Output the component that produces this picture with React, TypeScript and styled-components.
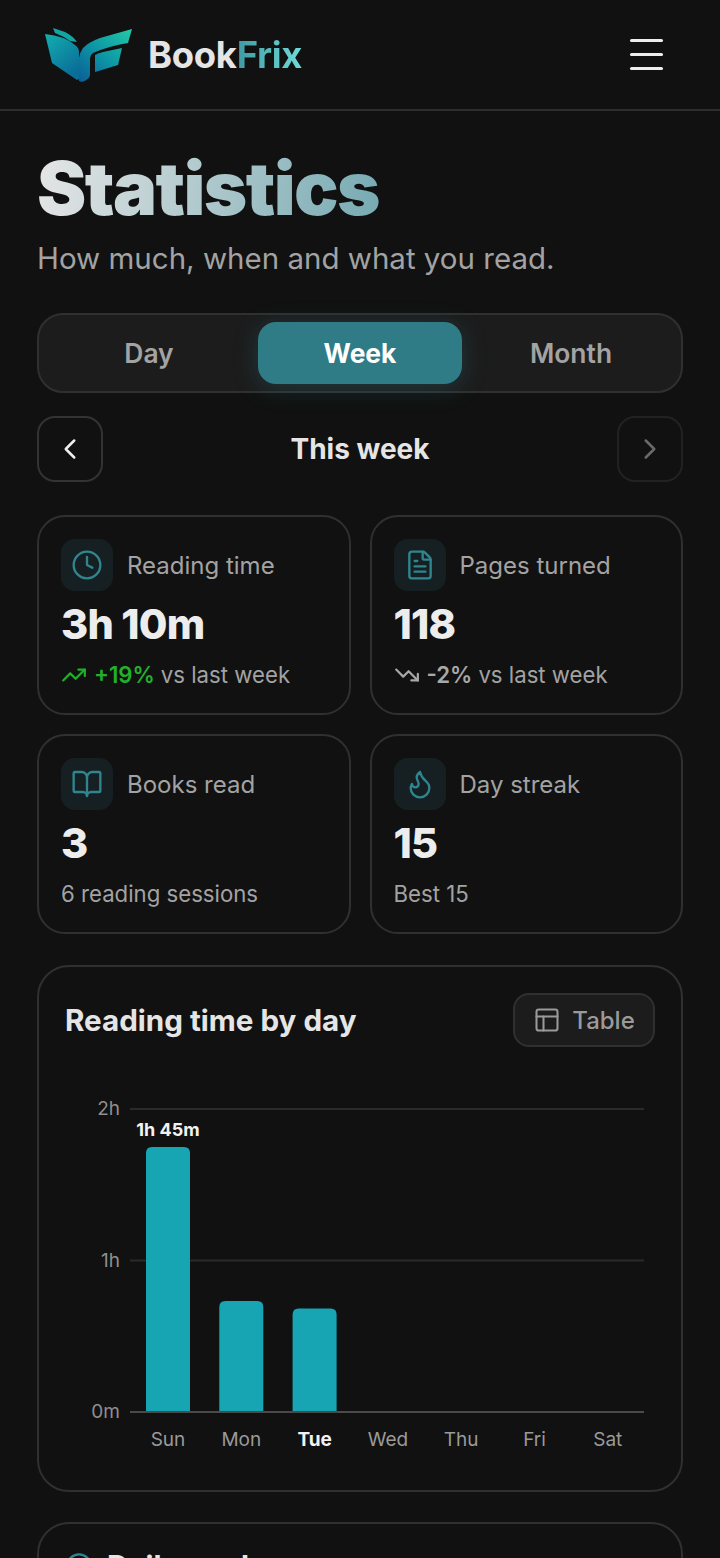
import React from 'react';
import styled, { createGlobalStyle } from 'styled-components';
import { BookOpen, ChevronLeft, ChevronRight, Clock, FileText, Flame, PanelsTopLeft, TrendingDown, TrendingUp } from 'lucide-react';

const GlobalStyle = createGlobalStyle`
  html, body {
    margin: 0;
    padding: 0;
    background: #111111;
  }
  * { box-sizing: border-box; }
`;

const Page = styled.div`
  width: 720px;
  height: 1558px;
  overflow: hidden;
  background: #111111;
  font-family: Inter, "Noto Sans", sans-serif;
  color: #e5e5e5;
`;

const Header = styled.header`
  height: 111px;
  padding: 0 57px 0 45px;
  display: flex;
  align-items: center;
  justify-content: space-between;
  border-bottom: 2px solid #2e2e2e;
`;

const Brand = styled.div`
  display: flex;
  align-items: center;
  gap: 15px;
`;

const BrandName = styled.span`
  font-size: 36.4px;
  font-weight: 700;
  letter-spacing: -0.3px;
  color: #e5e5e5;
  span {
    background: linear-gradient(90deg, #3f9aa3, #6fdcd8);
    -webkit-background-clip: text;
    background-clip: text;
    color: transparent;
  }
`;

const Burger = styled.div`
  width: 33px;
  display: flex;
  flex-direction: column;
  gap: 11px;
  i {
    display: block;
    height: 3px;
    border-radius: 2px;
    background: #eeeeee;
  }
`;

const Main = styled.main`
  padding: 37px 37px 0;
`;

const Title = styled.h1`
  margin: 0;
  font-size: 74px;
  line-height: 80px;
  font-weight: 900;
  letter-spacing: -1.6px;
  width: fit-content;
  background: linear-gradient(100deg, #e6e6e6 0%, #76aab2 100%);
  -webkit-background-clip: text;
  background-clip: text;
  color: transparent;
`;

const Subtitle = styled.p`
  margin: 10px 0 0;
  font-size: 29.5px;
  line-height: 40px;
  color: #a3a3a3;
`;

const Segments = styled.div`
  margin-top: 35px;
  height: 80px;
  padding: 7px 8px;
  display: grid;
  grid-template-columns: repeat(3, 1fr);
  gap: 7px;
  background: #1c1c1c;
  border: 2px solid #303030;
  border-radius: 26px;
`;

const Segment = styled.div<{ $active?: boolean }>`
  display: flex;
  align-items: center;
  justify-content: center;
  border-radius: 18px;
  font-size: 26.4px;
  font-weight: ${p => (p.$active ? 700 : 600)};
  color: ${p => (p.$active ? '#ffffff' : '#a3a3a3')};
  background: ${p => (p.$active ? '#2f7c87' : 'transparent')};
  box-shadow: ${p => (p.$active ? '0 4px 24px rgba(47, 124, 135, 0.3)' : 'none')};
`;

const Pager = styled.div`
  margin-top: 23px;
  display: flex;
  align-items: center;
  justify-content: space-between;
`;

const PagerButton = styled.div<{ $disabled?: boolean }>`
  width: 66px;
  height: 66px;
  display: flex;
  align-items: center;
  justify-content: center;
  border-radius: 18px;
  border: 2px solid ${p => (p.$disabled ? '#222222' : '#333333')};
  color: ${p => (p.$disabled ? '#6a6a6a' : '#eeeeee')};
`;

const PagerLabel = styled.div`
  font-size: 28px;
  font-weight: 700;
  color: #e5e5e5;
`;

const CardGrid = styled.div`
  margin-top: 33px;
  display: grid;
  grid-template-columns: repeat(2, 1fr);
  column-gap: 19px;
  row-gap: 19px;
`;

const StatCard = styled.div`
  height: 200px;
  padding: 22px 22px 0;
  border: 2px solid #303030;
  border-radius: 28px;
`;

const StatHead = styled.div`
  display: flex;
  align-items: center;
  gap: 14px;
`;

const IconBox = styled.div`
  width: 52px;
  height: 52px;
  flex: none;
  display: flex;
  align-items: center;
  justify-content: center;
  border-radius: 14px;
  background: #162022;
  color: #2f8590;
`;

const StatLabel = styled.span`
  font-size: 24px;
  color: #a3a3a3;
`;

const StatValue = styled.div`
  margin-top: 5px;
  font-size: 41.5px;
  line-height: 56px;
  font-weight: 800;
  letter-spacing: -0.8px;
  color: #ededed;
`;

const StatNote = styled.div`
  margin-top: 6px;
  display: flex;
  align-items: center;
  gap: 6px;
  font-size: 22.2px;
  line-height: 34px;
  color: #a3a3a3;
`;

const Delta = styled.span<{ $up?: boolean }>`
  display: inline-flex;
  align-items: center;
  gap: 7px;
  font-weight: 600;
  color: ${p => (p.$up ? '#22b02c' : '#a8a8a8')};
`;

const Panel = styled.section`
  margin-top: 30px;
  border: 2px solid #303030;
  border-radius: 32px;
  padding: 26px 26px 0;
`;

const ChartPanel = styled(Panel)`
  margin-top: 31px;
  height: 527px;
`;

const PanelHead = styled.div`
  display: flex;
  align-items: center;
  justify-content: space-between;
`;

const PanelTitle = styled.h2`
  margin: 0;
  display: flex;
  align-items: center;
  gap: 14px;
  font-size: 29.6px;
  font-weight: 700;
  color: #e5e5e5;
`;

const TableToggle = styled.div`
  height: 54px;
  width: 142px;
  display: flex;
  align-items: center;
  justify-content: center;
  gap: 11px;
  background: #1c1c1c;
  border: 2px solid #303030;
  border-radius: 16px;
  font-size: 24px;
  font-weight: 500;
  color: #9a9a9a;
`;

const Chart = styled.svg`
  display: block;
  margin: 34px 0 0 -27px;
  font-family: Inter, "Noto Sans", sans-serif;
`;

const GoalPanel = styled(Panel)`
  height: 200px;
  padding-top: 24px;
`;

// chart coordinates are relative to the svg, which starts at x=38
const hourHeight = 151.5;
const baseY = 331;
const days = [
  { name: 'Sun', minutes: 105 },
  { name: 'Mon', minutes: 44 },
  { name: 'Tue', minutes: 41, today: true },
  { name: 'Wed', minutes: 0 },
  { name: 'Thu', minutes: 0 },
  { name: 'Fri', minutes: 0 },
  { name: 'Sat', minutes: 0 },
];

const Logo = () => (
  <svg width="88" height="56" viewBox="0 0 88 56">
    <defs>
      <linearGradient id="logoLeft" x1="0" y1="0" x2="0.6" y2="1">
        <stop offset="0" stopColor="#13aeae" />
        <stop offset="1" stopColor="#0a6e99" />
      </linearGradient>
      <linearGradient id="logoRight" gradientUnits="userSpaceOnUse" x1="87" y1="2" x2="36" y2="55">
        <stop offset="0" stopColor="#24c9a6" />
        <stop offset="0.5" stopColor="#0e9aa6" />
        <stop offset="1" stopColor="#0a5f98" />
      </linearGradient>
    </defs>
    <path d="M8 1 L20 5 Q28 9 32 15 L25 14 Q18 9 10 6 Z" fill="#12a5a2" />
    <path d="M0 7 Q20 9 30 18 Q34 21 34 25 L34 52 L32 53 L7 36 Z" fill="url(#logoLeft)" />
    <path d="M87 2 L83 16 Q64 19 48 26 Q45 28 45 31 L45 48 Q45 52 37 55 L34 54 L34 31 Q35 25 38 21 Q44 15 55 11 Z" fill="url(#logoRight)" />
    <path d="M77 21 L73 38 L50 45 L50 28 Q54 26 58 25 Z" fill="url(#logoRight)" />
  </svg>
);

const App = (): React.ReactElement => {
  return (
    <Page>
      <GlobalStyle />
      <Header>
        <Brand>
          <Logo />
          <BrandName>Book<span>Frix</span></BrandName>
        </Brand>
        <Burger><i /><i /><i /></Burger>
      </Header>
      <Main>
        <Title>Statistics</Title>
        <Subtitle>How much, when and what you read.</Subtitle>
        <Segments>
          <Segment>Day</Segment>
          <Segment $active>Week</Segment>
          <Segment>Month</Segment>
        </Segments>
        <Pager>
          <PagerButton><ChevronLeft size={34} strokeWidth={1.75} /></PagerButton>
          <PagerLabel>This week</PagerLabel>
          <PagerButton $disabled><ChevronRight size={34} strokeWidth={1.75} /></PagerButton>
        </Pager>
        <CardGrid>
          <StatCard>
            <StatHead>
              <IconBox><Clock size={32} strokeWidth={1.75} /></IconBox>
              <StatLabel>Reading time</StatLabel>
            </StatHead>
            <StatValue>3h 10m</StatValue>
            <StatNote>
              <Delta $up><TrendingUp size={26} strokeWidth={2} />+19%</Delta>
              <span>vs last week</span>
            </StatNote>
          </StatCard>
          <StatCard>
            <StatHead>
              <IconBox><FileText size={32} strokeWidth={1.75} /></IconBox>
              <StatLabel>Pages turned</StatLabel>
            </StatHead>
            <StatValue>118</StatValue>
            <StatNote>
              <Delta><TrendingDown size={26} strokeWidth={2} />-2%</Delta>
              <span>vs last week</span>
            </StatNote>
          </StatCard>
          <StatCard>
            <StatHead>
              <IconBox><BookOpen size={32} strokeWidth={1.75} /></IconBox>
              <StatLabel>Books read</StatLabel>
            </StatHead>
            <StatValue>3</StatValue>
            <StatNote>6 reading sessions</StatNote>
          </StatCard>
          <StatCard>
            <StatHead>
              <IconBox><Flame size={32} strokeWidth={1.75} /></IconBox>
              <StatLabel>Day streak</StatLabel>
            </StatHead>
            <StatValue>15</StatValue>
            <StatNote>Best 15</StatNote>
          </StatCard>
        </CardGrid>
        <ChartPanel>
          <PanelHead>
            <PanelTitle>Reading time by day</PanelTitle>
            <TableToggle><PanelsTopLeft size={28} strokeWidth={1.75} />Table</TableToggle>
          </PanelHead>
          <Chart width="644" height="380" viewBox="0 0 644 380">
            <g fontSize="19" fill="#8f8f8f" textAnchor="end">
              <text x="82" y={baseY - 2 * hourHeight + 6}>2h</text>
              <text x="82" y={baseY - hourHeight + 6}>1h</text>
              <text x="82" y={baseY + 6}>0m</text>
            </g>
            <line x1="92" x2="606" y1={baseY - 2 * hourHeight} y2={baseY - 2 * hourHeight} stroke="#2a2a2a" strokeWidth="2" />
            <line x1="92" x2="606" y1={baseY - hourHeight} y2={baseY - hourHeight} stroke="#2a2a2a" strokeWidth="2" />
            {days.map((d, i) => {
              const x = 108 + i * 73.3;
              const h = (d.minutes / 60) * hourHeight;
              return (
                <g key={d.name}>
                  {d.minutes > 0 && (
                    <path
                      d={`M${x} ${baseY} V${baseY - h + 6} Q${x} ${baseY - h} ${x + 6} ${baseY - h} H${x + 38} Q${x + 44} ${baseY - h} ${x + 44} ${baseY - h + 6} V${baseY} Z`}
                      fill="#17a5b4"
                    />
                  )}
                  <text
                    x={x + 22}
                    y={baseY + 34}
                    textAnchor="middle"
                    fontSize="19"
                    fontWeight={d.today ? 700 : 400}
                    fill={d.today ? '#f2f2f2' : '#9a9a9a'}
                  >
                    {d.name}
                  </text>
                </g>
              );
            })}
            <line x1="92" x2="606" y1={baseY} y2={baseY} stroke="#4a4a4a" strokeWidth="2" />
            <text x="130" y="55" textAnchor="middle" fontSize="18" fontWeight="700" fill="#f2f2f2">1h 45m</text>
          </Chart>
        </ChartPanel>
        <GoalPanel>
          <PanelTitle>
            <Clock size={28} strokeWidth={2} color="#2f8590" />
            Daily goal
          </PanelTitle>
        </GoalPanel>
      </Main>
    </Page>
  );
};

export default App;
